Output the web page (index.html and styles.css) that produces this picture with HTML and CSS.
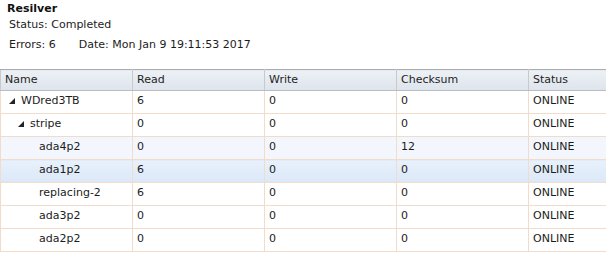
FILE: index.html
```html
<!DOCTYPE html>
<html>
<head>
<meta charset="utf-8">
<link rel="stylesheet" href="styles.css">
</head>
<body>
<div class="summary">
  <div class="title">Resilver</div>
  <div class="line">Status: Completed</div>
  <div class="line meta"><span>Errors: 6</span><span>Date: Mon Jan 9 19:11:53 2017</span></div>
</div>
<table class="grid">
  <colgroup><col class="c"><col class="c"><col class="c"><col class="c"><col></colgroup>
  <thead>
    <tr><th>Name</th><th>Read</th><th>Write</th><th>Checksum</th><th>Status</th></tr>
  </thead>
  <tbody>
    <tr><td class="name lvl0"><svg class="exp" width="6" height="6" viewBox="0 0 6 6"><polygon points="6,0 6,6 0,6"/></svg>WDred3TB</td><td>6</td><td>0</td><td>0</td><td>ONLINE</td></tr>
    <tr><td class="name lvl1"><svg class="exp" width="6" height="6" viewBox="0 0 6 6"><polygon points="6,0 6,6 0,6"/></svg>stripe</td><td>0</td><td>0</td><td>0</td><td>ONLINE</td></tr>
    <tr class="alt"><td class="name lvl2">ada4p2</td><td>0</td><td>0</td><td>12</td><td>ONLINE</td></tr>
    <tr class="sel"><td class="name lvl2">ada1p2</td><td>6</td><td>0</td><td>0</td><td>ONLINE</td></tr>
    <tr><td class="name lvl2">replacing-2</td><td>6</td><td>0</td><td>0</td><td>ONLINE</td></tr>
    <tr><td class="name lvl2">ada3p2</td><td>0</td><td>0</td><td>0</td><td>ONLINE</td></tr>
    <tr><td class="name lvl2">ada2p2</td><td>0</td><td>0</td><td>0</td><td>ONLINE</td></tr>
  </tbody>
</table>
</body>
</html>
```
FILE: styles.css
```css
html, body {
  margin: 0;
  padding: 0;
  overflow: hidden;
  background: #ffffff;
}
body {
  font-family: "DejaVu Sans", Verdana, sans-serif;
  font-size: 11px;
  color: #1c1c1c;
}
.summary {
  padding-top: 1px;
}
.title {
  font-weight: bold;
  line-height: 16px;
  padding-left: 7px;
  color: #111;
}
.line {
  line-height: 16px;
  padding-left: 9px;
}
.meta {
  margin-top: 4px;
  display: flex;
  gap: 23px;
}
.grid {
  margin-top: 16px;
  border-collapse: collapse;
  table-layout: fixed;
  width: 607px;
}
.grid col.c {
  width: 132px;
}
.grid th {
  text-align: left;
  font-weight: normal;
  color: #1e1e1e;
  padding: 3px 4px 3px 4px;
  line-height: 14px;
  background: linear-gradient(#edf1f6, #dde4ec);
  border-top: 1px solid #a9acb0;
  border-bottom: 1px solid #b9bcc0;
  border-left: 1px solid #c6c9cd;
  border-right: 1px solid #c6c9cd;
  white-space: nowrap;
}
.grid td {
  padding: 3px 4px 5px 4px;
  line-height: 14px;
  border: 1px solid #f1dccb;
  white-space: nowrap;
}
.grid th:last-child,
.grid td:last-child {
  border-right: none;
}
.grid tr.alt td {
  background: #f3f7fd;
}
.grid tr.sel td {
  background: linear-gradient(#e8f1fb, #dbe8f7);
}
.exp {
  fill: #222;
  margin-right: 6px;
  vertical-align: 0;
}
.grid td.lvl0 {
  padding-left: 8px;
}
.grid td.lvl1 {
  padding-left: 17px;
}
.grid td.lvl2 {
  padding-left: 38px;
}
```
